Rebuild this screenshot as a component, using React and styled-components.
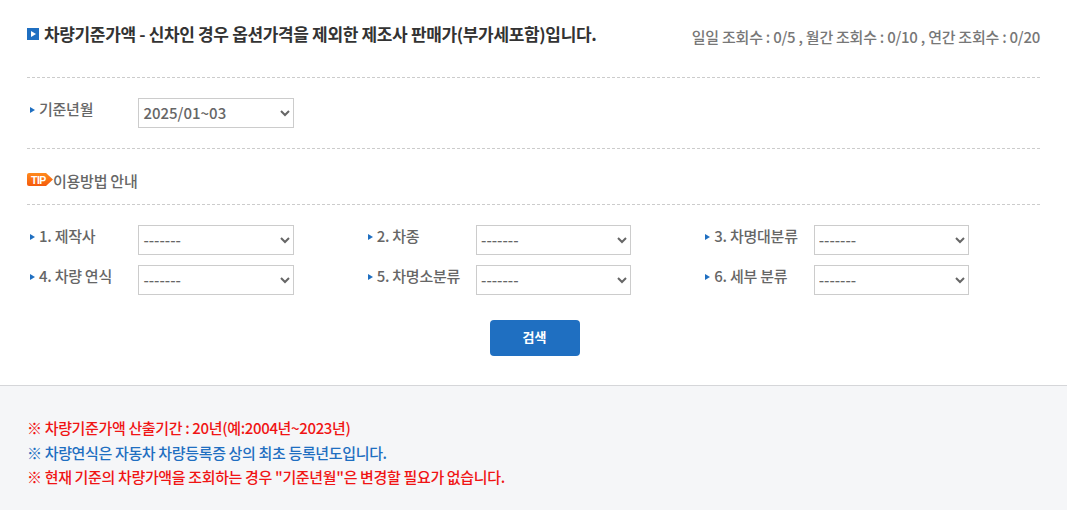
import React from "react";
import styled, { createGlobalStyle } from "styled-components";

const FONT = `"Noto Sans CJK KR", "Noto Sans", sans-serif`;

const fields = [
  "1. 제작사",
  "2. 차종",
  "3. 차명대분류",
  "4. 차량 연식",
  "5. 차명소분류",
  "6. 세부 분류",
];

export default function App() {
  return (
    <>
      <GlobalStyle />
      <Main>
        <Header>
          <Title>
            <TitleIcon>
              <svg width="12" height="12" viewBox="0 0 12 12">
                <rect width="12" height="12" fill="#1f6fc1" />
                <path d="M4 3l5 3-5 3z" fill="#fff" />
              </svg>
            </TitleIcon>
            차량기준가액 - 신차인 경우 옵션가격을 제외한 제조사 판매가(부가세포함)입니다.
          </Title>
          <Counts>일일 조회수 : 0/5 , 월간 조회수 : 0/10 , 연간 조회수 : 0/20</Counts>
        </Header>

        <YearRow>
          <Field>
            <Label>기준년월</Label>
            <Select defaultValue="2025/01~03">
              <option>2025/01~03</option>
            </Select>
          </Field>
        </YearRow>

        <TipRow>
          <TipMark>
            <svg width="26" height="13" viewBox="0 0 26 13">
              <defs>
                <linearGradient id="tipFill" x1="0" y1="0" x2="0" y2="1">
                  <stop offset="0" stopColor="#ff8a1e" />
                  <stop offset="1" stopColor="#f55a0c" />
                </linearGradient>
              </defs>
              <path d="M2 0h17l7 6.5-7 6.5H2a2 2 0 0 1-2-2V2a2 2 0 0 1 2-2z" fill="url(#tipFill)" />
            </svg>
            <TipBadge>TIP</TipBadge>
          </TipMark>
          <TipText>이용방법 안내</TipText>
        </TipRow>

        <FieldGrid>
          {fields.map((name) => (
            <Field key={name}>
              <Label>{name}</Label>
              <Select defaultValue="-------">
                <option>-------</option>
              </Select>
            </Field>
          ))}
        </FieldGrid>

        <Actions>
          <SearchButton type="button">검색</SearchButton>
        </Actions>
      </Main>

      <Notes>
        <Note $color="#f01414">※ 차량기준가액 산출기간 : 20년(예:2004년~2023년)</Note>
        <Note $color="#1f6fc1">※ 차량연식은 자동차 차량등록증 상의 최초 등록년도입니다.</Note>
        <Note $color="#f01414">※ 현재 기준의 차량가액을 조회하는 경우 "기준년월"은 변경할 필요가 없습니다.</Note>
      </Notes>
    </>
  );
}

const GlobalStyle = createGlobalStyle`
  body {
    margin: 0;
    background: #fff;
    font-family: ${FONT};
    color: #666;
  }
`;

const Main = styled.div`
  height: 385px;
  padding: 0 27px;
  box-sizing: border-box;
`;

const Header = styled.div`
  height: 78px;
  display: flex;
  justify-content: space-between;
  border-bottom: 1px dashed #ccc;
  box-sizing: border-box;
`;

const Title = styled.h2`
  margin: 20px 0 0;
  display: flex;
  align-items: center;
  height: 26px;
  font-size: 17px;
  font-weight: 700;
  color: #333;
  letter-spacing: -0.35px;
  white-space: nowrap;
`;

const TitleIcon = styled.span`
  display: flex;
  margin: 1px 5px 0 0;
`;

const Counts = styled.div`
  margin-top: 25px;
  height: 24px;
  line-height: 24px;
  font-size: 15px;
  font-weight: 500;
  color: #777;
  letter-spacing: -0.25px;
  white-space: nowrap;
`;

const YearRow = styled.div`
  height: 71px;
  padding-top: 20px;
  box-sizing: border-box;
  border-bottom: 1px dashed #ccc;
`;

const Field = styled.div`
  display: flex;
  align-items: flex-start;
`;

const Label = styled.span`
  position: relative;
  width: 111.4px;
  padding-left: 12px;
  box-sizing: border-box;
  height: 22px;
  line-height: 22px;
  font-size: 15px;
  font-weight: 500;
  color: #666;
  letter-spacing: -0.25px;
  white-space: nowrap;

  &::before {
    content: "";
    position: absolute;
    left: 3px;
    top: 9px;
    border-left: 5px solid #1f6fc1;
    border-top: 3px solid transparent;
    border-bottom: 3px solid transparent;
  }
`;

const Select = styled.select`
  width: 155.2px;
  height: 30px;
  padding: 0 0 2px;
  border: 1px solid #ccc;
  border-radius: 0;
  background: #fff;
  font-family: ${FONT};
  font-size: 15px;
  font-weight: 500;
  color: #666;
  outline: none;
`;

const TipRow = styled.div`
  height: 56px;
  padding-top: 8px;
  display: flex;
  align-items: center;
  border-bottom: 1px dashed #ccc;
  box-sizing: border-box;
`;

const TipMark = styled.span`
  position: relative;
  display: flex;
  margin-top: -2px;
`;

const TipBadge = styled.span`
  position: absolute;
  left: 4px;
  top: 1px;
  font-family: "Liberation Sans", sans-serif;
  font-size: 10.5px;
  line-height: 12px;
  font-weight: 700;
  letter-spacing: -0.5px;
  color: #fff;
`;

const TipText = styled.span`
  font-size: 15px;
  font-weight: 500;
  color: #666;
  letter-spacing: -0.25px;
`;

const FieldGrid = styled.div`
  display: grid;
  grid-template-columns: repeat(3, 337.67px);
  row-gap: 10px;
  padding-top: 20px;
`;

const Actions = styled.div`
  display: flex;
  justify-content: center;
  padding: 25px 0 0 2px;
`;

const SearchButton = styled.button`
  width: 90px;
  height: 36px;
  padding: 0 0 3px;
  border: 0;
  border-radius: 4px;
  background: #1f6fc1;
  color: #fff;
  font-family: ${FONT};
  font-size: 13px;
  font-weight: 700;
`;

const Notes = styled.div`
  height: 125px;
  padding: 30px 27px 0;
  box-sizing: border-box;
  background: #f5f6f8;
  border-top: 1px solid #d5d6d9;
`;

const Note = styled.p`
  margin: 0;
  height: 24.5px;
  line-height: 24.5px;
  font-size: 15px;
  font-weight: 500;
  color: ${(p) => p.$color};
  letter-spacing: -0.35px;
  white-space: nowrap;
`;
